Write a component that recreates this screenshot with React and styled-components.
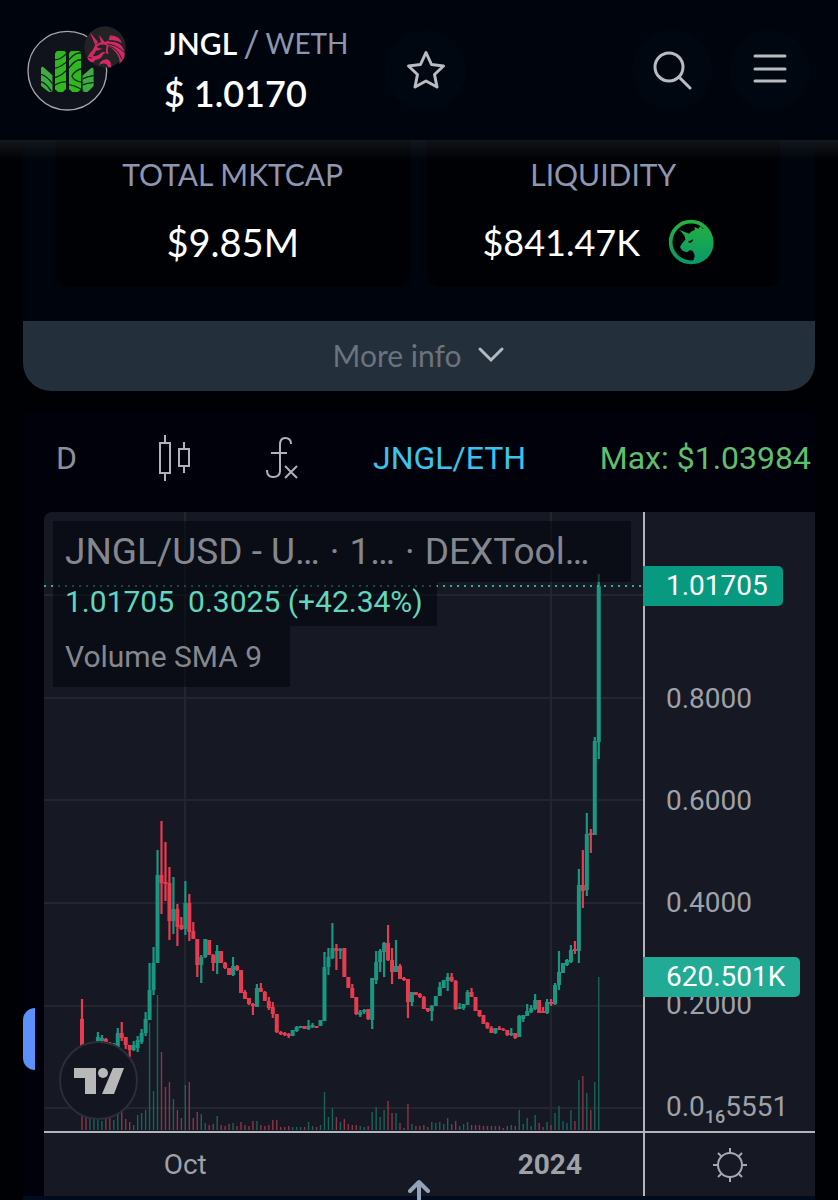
import React from "react";
import styled, { createGlobalStyle } from "styled-components";

const GlobalStyle = createGlobalStyle`
  * {
    box-sizing: border-box;
  }
  body {
    margin: 0;
    background: #000104;
    font-family: Lato, "Open Sans", sans-serif;
    color: #fff;
  }
  button {
    font: inherit;
    color: inherit;
    background: none;
    border: 0;
    padding: 0;
    cursor: pointer;
  }
  svg {
    display: block;
  }
`;

const Page = styled.div`
  position: relative;
  overflow: hidden;
`;

const Header = styled.header`
  display: flex;
  align-items: center;
  height: 140px;
  padding: 0 28px 0 20px;
  background: #00050d;
`;

const Token = styled.div`
  display: flex;
  align-items: center;
  gap: 34px;
  padding-bottom: 4px;
`;

const TokenTitle = styled.div`
  width: 182px;
`;

const Pair = styled.h1`
  display: flex;
  gap: 6px;
  margin: 0;
  font-size: 30px;
  line-height: 50px;
  font-weight: 600;
  white-space: nowrap;
`;

const Quote = styled.span`
  color: #8c96ae;
  font-size: 28px;
  font-weight: 400;
`;

const Slash = styled(Quote)`
  font-size: 36px;
`;

const Price = styled.p`
  margin: 0;
  font-size: 36px;
  line-height: 50px;
  font-weight: 600;
`;

const RoundButton = styled.button`
  display: flex;
  align-items: center;
  justify-content: center;
  width: 80px;
  height: 80px;
  border-radius: 50%;
  background: #000710;
  color: #b9bbc0;
  margin-left: ${props => props.$gap};
`;

const Content = styled.main`
  padding: 0 23px;
  background: linear-gradient(#14171c, #000104) top / 100% 20px no-repeat;
`;

const InfoCard = styled.section`
  border-radius: 0 0 28px 28px;
  overflow: hidden;
  background: linear-gradient(rgba(20, 23, 28, 0.9), #00050d 20px);
`;

const Stats = styled.div`
  display: grid;
  grid-template-columns: 1fr 1fr;
  gap: 17px;
  padding: 0 35px 34px 33px;
`;

const Stat = styled.div`
  height: 147px;
  padding-top: 9px;
  border-radius: 0 0 12px 12px;
  background: linear-gradient(#101318, #000105 20px);
  text-align: center;
`;

const StatName = styled.h2`
  margin: 0 0 20px;
  font-size: 30px;
  line-height: 50px;
  font-weight: 400;
  color: #8f97b0;
`;

const StatValue = styled.div`
  display: flex;
  align-items: center;
  justify-content: center;
  gap: 28px;
  padding-right: ${props => props.$end};
  font-size: ${props => props.$size};
  line-height: 46px;
`;

const MoreInfo = styled.button`
  display: flex;
  align-items: center;
  justify-content: center;
  gap: 16px;
  width: 100%;
  height: 70px;
  padding-bottom: 2px;
  background: #232f3a;
  color: #6b737e;
  font-size: 30px;
`;

const ChartPanel = styled.section`
  margin-top: 22px;
  background: #00010b;
  font-family: Roboto, sans-serif;
  border-bottom: 4px solid #020b1e;
`;

const Toolbar = styled.div`
  display: flex;
  align-items: center;
  justify-content: space-between;
  height: 99px;
  padding: 0 4px 10px 33px;
  font-size: 32px;
  color: #8d8f96;
  white-space: nowrap;
`;

const Interval = styled.button`
  width: 28px;
  text-align: left;
`;

const PairButton = styled.button`
  color: #3bc4ea;
`;

const MaxPrice = styled.span`
  color: #5fbf6d;
`;

const Chart = styled.div`
  display: grid;
  grid-template-columns: 1fr 172px;
  margin-left: 21px;
  border-radius: 8px 0 0 0;
  background: #161824;
  color: #9fa1a9;
  font-size: 28px;
`;

const Plot = styled.div`
  position: relative;
  border-bottom: 2px solid #b2b5be;
`;

const Legend = styled.div`
  position: absolute;
  top: 9px;
  left: 9px;
  right: 9px;
  display: flex;
  flex-direction: column;
  align-items: flex-start;
  color: #85878e;
`;

const LegendRow = styled.div`
  display: flex;
  align-items: center;
  gap: 10px;
  height: 61px;
  padding: 0 ${props => props.$end} 0 12px;
  background: rgba(4, 6, 14, 0.6);
  font-size: ${props => props.$size};
  white-space: nowrap;
`;

const LegendValues = styled(LegendRow)`
  gap: 14px;
  height: 44px;
  padding-bottom: 6px;
  color: #62d6bd;
`;

const Brand = styled.a`
  position: absolute;
  left: 15px;
  bottom: 11px;
  display: flex;
  align-items: center;
  justify-content: center;
  width: 79px;
  height: 79px;
  border: 2px solid #2b2d38;
  border-radius: 50%;
  background: #131520;
`;

const PriceAxis = styled.div`
  position: relative;
  border-left: 2px solid #b2b5be;
  border-bottom: 2px solid #b2b5be;
  padding-left: 21px;
`;

const Scale = styled.ul`
  display: flex;
  flex-direction: column;
  gap: 62px;
  margin: 0;
  padding: 167px 0 0;
  list-style: none;
  line-height: 40px;

  sub {
    font-size: 18px;
    line-height: 0;
    font-weight: 500;
  }
`;

const PriceTag = styled.div`
  position: absolute;
  left: -2px;
  top: ${props => props.$top};
  padding: 0 15px 0 23px;
  line-height: 40px;
  border-radius: 0 5px 5px 0;
  background: ${props => props.$color};
  color: #fff;
`;

const TimeAxis = styled.div`
  display: grid;
  grid-template-columns: 282fr 130fr 186fr;
  align-items: center;
  height: 63px;
  text-align: center;

  b {
    grid-column: 3;
  }
`;

const Corner = styled.div`
  display: flex;
  align-items: center;
  justify-content: center;
  border-left: 2px solid #b2b5be;
`;

const SideTab = styled.button`
  position: absolute;
  left: 23px;
  bottom: 130px;
  width: 12px;
  height: 62px;
  border-radius: 12px 0 0 12px;
  background: #5c90fa;
`;

const ScrollTop = styled.button`
  position: absolute;
  left: 50%;
  bottom: -8px;
  transform: translateX(-50%);
  color: #94a2ba;
`;

// up/down, high, body top, body bottom, low, volume
const candles = [
  ["d", 999, 1019, 1075, 1075, 17],
  ["d", 1070, 1072, 1078, 1080, 16],
  ["u", 1062, 1065, 1078, 1080, 15],
  ["u", 1050, 1052, 1065, 1068, 14],
  ["u", 1032, 1037, 1048, 1050, 13],
  ["u", 1035, 1038, 1041, 1042, 9],
  ["d", 1038, 1039, 1043, 1043, 13],
  ["d", 1042, 1043, 1047, 1048, 15],
  ["u", 1043, 1044, 1047, 1048, 10],
  ["u", 1028, 1033, 1047, 1048, 18],
  ["d", 1022, 1033, 1038, 1041, 19],
  ["d", 1037, 1037, 1045, 1049, 11],
  ["d", 1045, 1045, 1050, 1057, 8],
  ["u", 1041, 1045, 1050, 1051, 5],
  ["u", 1036, 1040, 1048, 1052, 15],
  ["u", 1029, 1033, 1042, 1044, 17],
  ["u", 1012, 1019, 1033, 1036, 20],
  ["u", 963, 990, 1020, 1020, 107],
  ["u", 947, 963, 990, 995, 39],
  ["u", 850, 875, 963, 963, 135],
  ["d", 821, 875, 883, 914, 78],
  ["d", 842, 882, 884, 901, 43],
  ["d", 867, 883, 921, 940, 48],
  ["u", 877, 909, 921, 934, 31],
  ["d", 904, 909, 927, 946, 20],
  ["d", 917, 925, 929, 930, 12],
  ["u", 881, 903, 929, 935, 45],
  ["d", 894, 903, 932, 941, 48],
  ["d", 922, 931, 939, 939, 12],
  ["d", 939, 939, 965, 977, 18],
  ["u", 955, 957, 965, 983, 16],
  ["u", 939, 939, 957, 958, 7],
  ["d", 940, 940, 955, 955, 5],
  ["d", 954, 955, 963, 971, 6],
  ["u", 945, 951, 963, 974, 14],
  ["d", 951, 951, 963, 963, 5],
  ["d", 962, 963, 968, 969, 4],
  ["d", 968, 968, 975, 975, 6],
  ["u", 957, 966, 975, 976, 7],
  ["d", 965, 966, 970, 971, 4],
  ["d", 970, 970, 993, 993, 8],
  ["d", 990, 992, 999, 999, 5],
  ["d", 998, 998, 1004, 1005, 4],
  ["d", 1003, 1004, 1006, 1015, 9],
  ["u", 984, 988, 1007, 1007, 9],
  ["d", 983, 988, 992, 992, 5],
  ["d", 991, 992, 1001, 1001, 4],
  ["d", 997, 1001, 1008, 1010, 5],
  ["d", 1002, 1007, 1014, 1018, 10],
  ["d", 1014, 1014, 1032, 1033, 10],
  ["d", 1031, 1032, 1034, 1035, 3],
  ["d", 1032, 1033, 1035, 1036, 3],
  ["d", 1033, 1034, 1036, 1038, 4],
  ["u", 1030, 1030, 1036, 1036, 3],
  ["u", 1026, 1027, 1031, 1032, 3],
  ["u", 1026, 1026, 1028, 1028, 3],
  ["d", 1026, 1026, 1029, 1029, 3],
  ["u", 1020, 1026, 1029, 1030, 8],
  ["u", 1023, 1025, 1027, 1028, 4],
  ["d", 1026, 1026, 1028, 1028, 3],
  ["u", 1020, 1020, 1026, 1026, 5],
  ["u", 952, 967, 1021, 1021, 38],
  ["u", 948, 957, 967, 975, 13],
  ["u", 923, 948, 958, 959, 22],
  ["d", 944, 948, 951, 970, 13],
  ["u", 948, 949, 951, 959, 8],
  ["d", 948, 948, 977, 977, 11],
  ["d", 977, 977, 988, 988, 6],
  ["d", 984, 988, 998, 998, 5],
  ["d", 997, 997, 1014, 1015, 5],
  ["u", 1010, 1012, 1015, 1017, 4],
  ["u", 1009, 1010, 1012, 1014, 3],
  ["d", 1009, 1009, 1019, 1020, 4],
  ["u", 978, 978, 1020, 1029, 18],
  ["u", 951, 962, 980, 984, 23],
  ["u", 949, 951, 962, 972, 13],
  ["u", 942, 943, 952, 977, 20],
  ["d", 925, 943, 960, 961, 29],
  ["d", 948, 960, 972, 984, 17],
  ["u", 940, 966, 972, 972, 17],
  ["d", 964, 966, 979, 979, 7],
  ["d", 977, 978, 980, 981, 2],
  ["d", 979, 979, 1002, 1018, 26],
  ["u", 992, 992, 1002, 1006, 6],
  ["d", 992, 992, 995, 995, 4],
  ["d", 993, 994, 997, 998, 4],
  ["d", 996, 997, 1009, 1009, 5],
  ["d", 1008, 1008, 1011, 1012, 3],
  ["u", 1005, 1006, 1011, 1021, 8],
  ["u", 996, 996, 1006, 1006, 7],
  ["u", 982, 987, 996, 996, 8],
  ["u", 980, 980, 988, 988, 6],
  ["u", 973, 977, 981, 991, 12],
  ["d", 973, 977, 981, 982, 6],
  ["d", 980, 981, 1009, 1010, 9],
  ["u", 1003, 1007, 1009, 1009, 4],
  ["u", 1004, 1004, 1008, 1010, 6],
  ["u", 990, 992, 1005, 1005, 8],
  ["d", 988, 992, 997, 997, 5],
  ["d", 997, 997, 1011, 1011, 5],
  ["d", 1010, 1010, 1016, 1017, 5],
  ["d", 1015, 1015, 1024, 1024, 4],
  ["d", 1022, 1023, 1028, 1029, 4],
  ["d", 1026, 1028, 1033, 1033, 4],
  ["u", 1028, 1028, 1033, 1034, 4],
  ["d", 1026, 1028, 1030, 1030, 4],
  ["d", 1028, 1029, 1030, 1031, 2],
  ["d", 1030, 1030, 1035, 1036, 4],
  ["u", 1028, 1033, 1035, 1036, 5],
  ["d", 1033, 1033, 1038, 1039, 4],
  ["u", 1015, 1016, 1037, 1037, 20],
  ["u", 1015, 1015, 1019, 1022, 6],
  ["u", 1004, 1011, 1016, 1016, 12],
  ["u", 1005, 1008, 1012, 1013, 4],
  ["u", 994, 1000, 1009, 1010, 15],
  ["d", 1000, 1000, 1013, 1013, 7],
  ["d", 1007, 1011, 1013, 1013, 3],
  ["u", 999, 1002, 1013, 1014, 8],
  ["d", 999, 1002, 1004, 1006, 5],
  ["u", 983, 985, 1004, 1005, 17],
  ["u", 951, 972, 985, 990, 24],
  ["u", 963, 963, 973, 973, 9],
  ["u", 959, 960, 965, 966, 7],
  ["u", 945, 950, 962, 963, 20],
  ["d", 941, 949, 951, 954, 9],
  ["u", 869, 885, 951, 963, 50],
  ["d", 850, 885, 891, 908, 54],
  ["u", 813, 834, 890, 896, 37],
  ["d", 829, 833, 835, 853, 20],
  ["u", 737, 741, 835, 835, 48],
  ["u", 574, 586, 742, 759, 153]
];

const colors = { u: "#1a9781", d: "#e83b50" };
const volumeColors = { u: "#1a6358", d: "#8c3547" };

const firstX = 82;
const step = 3.975;
const plotBottom = 1130;

const PriceChart = () => (
  <svg
    width="100%"
    height="619"
    viewBox="44 512 599 619"
    preserveAspectRatio="none"
    role="img"
    aria-label="JNGL/USD daily candles"
  >
    <g stroke="#24262f" strokeWidth="2">
      {[595, 698, 800, 903, 1006, 1108].map(y => (
        <path key={y} d={`M44 ${y}H643`} />
      ))}
      {[185, 551].map(x => (
        <path key={x} d={`M${x} 512V1131`} />
      ))}
    </g>
    {candles.map(([dir, , , , , volume], i) => (
      <rect
        key={i}
        x={firstX + i * step - 0.7}
        y={plotBottom - volume}
        width="1.4"
        height={volume}
        fill={volumeColors[dir]}
      />
    ))}
    {candles.map(([dir, high, top, bottom, low], i) => {
      const x = firstX + i * step;
      return (
        <g key={i} fill={colors[dir]}>
          <rect x={x - 1.1} y={high} width="2.2" height={low - high} />
          <rect x={x - 2} y={top} width="4" height={bottom - top} />
        </g>
      );
    })}
    <path d="M44 586H643" stroke="#2fae99" strokeWidth="2" strokeDasharray="2 5" />
  </svg>
);

const TokenLogo = () => (
  <svg width="110" height="100" viewBox="0 0 330 300" aria-hidden="true">
    <defs>
      <clipPath id="bars">
        <path d="M63 152Q65 143 72 149L97 172V220Q90 225 84 220L63 203ZM105 108Q107 98 117 98H128Q138 98 138 108V213L128 223H115L105 214ZM147 108Q149 98 159 98H172Q183 98 183 108V214L173 223H158L147 213ZM188 173L214 150Q221 148 221 156V204L203 221Q194 224 188 219Z" />
      </clipPath>
    </defs>
    <circle cx="142" cy="158" r="118" fill="#10131b" stroke="#a4a6aa" strokeWidth="4" />
    <g clipPath="url(#bars)">
      <path fill="#2fb81f" d="M55 90H230V230H55Z" />
      <path fill="#45a552" opacity=".7" d="M55 140H100V230H55ZM186 140H230V230H186Z" />
      <g fill="none" stroke="#0d2a14" strokeWidth="4">
        <path d="M58 168Q80 172 98 198M58 190Q78 194 94 220" />
        <path d="M100 126Q124 126 142 104M100 152Q126 148 150 122T190 110M100 180Q128 174 150 146T190 128M100 206Q116 190 142 192" />
        <path d="M190 150Q162 158 156 174Q158 188 190 194M142 200Q162 200 190 218" />
        <path d="M184 184Q204 174 226 172M184 202Q206 192 226 194" />
      </g>
    </g>
    <circle cx="255" cy="87" r="62" fill="#232225" />
    <g fill="#cf2a66">
      <path d="M209 42L234 72L226 82ZM237 50L254 72L246 84Z" />
      <path d="M226 80Q240 70 254 72Q276 62 300 78Q318 96 313 118Q306 132 298 138Q302 120 288 104Q276 88 264 86Q262 98 266 108Q256 104 250 108Q244 124 226 126L220 133Q210 134 203 124Q201 116 208 108Q220 96 226 80Z" />
      <path d="M270 52Q300 54 306 76Q290 66 266 66Z" />
      <path d="M236 142Q244 122 262 124Q276 130 273 148Q262 150 262 140Q250 132 236 142Z" />
    </g>
    <path
      fill="#232225"
      d="M230 86Q244 76 260 82Q256 96 258 104Q246 98 240 108Q232 116 218 114Q226 104 228 98Q244 96 246 90Q238 94 230 86Z"
    />
    <path
      fill="none"
      stroke="#232225"
      strokeWidth="3"
      d="M262 78Q290 80 314 104M266 84Q294 92 306 124M268 70Q296 68 312 88M206 118L216 120"
    />
  </svg>
);

const UnicornIcon = () => (
  <svg width="46" height="46" viewBox="31 36 138 138" aria-hidden="true">
    <defs>
      <linearGradient id="leaf" gradientUnits="userSpaceOnUse" x1="0" y1="38" x2="0" y2="172">
        <stop offset="0" stopColor="#28b23c" />
        <stop offset="1" stopColor="#06996b" />
      </linearGradient>
    </defs>
    <circle cx="100" cy="105" r="61" fill="none" stroke="url(#leaf)" strokeWidth="11" />
    <path
      fill="url(#leaf)"
      d="M64 68L94 80Q100 72 112 68L110 60L122 65L129 57L136 66L142 58A62 62 0 0 1 100 170Q118 152 106 133Q98 126 90 134Q76 138 67 120Q72 108 83 98Q84 84 64 68Z"
    />
    <path fill="#000105" d="M91 104L106 97Q106 107 96 108Z" />
  </svg>
);

const StarIcon = () => (
  <svg width="40" height="40" viewBox="0 0 40 40" aria-hidden="true">
    <path
      d="M20 2.500L25.500 14.500L37.500 16L28.500 24.500L31 37L20 31L9 37L11.500 24.500L2.500 16L14.500 14.500Z"
      fill="none"
      stroke="currentColor"
      strokeWidth="3"
      strokeLinejoin="round"
    />
  </svg>
);

const SearchIcon = () => (
  <svg width="40" height="40" viewBox="0 0 40 40" fill="none" stroke="currentColor" strokeWidth="3" strokeLinecap="round" aria-hidden="true">
    <circle cx="17" cy="17" r="14" />
    <path d="M27 27L38 38" />
  </svg>
);

const MenuIcon = () => (
  <svg width="36" height="32" viewBox="0 0 36 32" stroke="currentColor" strokeWidth="3" strokeLinecap="round" aria-hidden="true">
    <path d="M3 2H33M3 15H33M3 27H33" />
  </svg>
);

const CandlesIcon = () => (
  <svg width="34" height="48" viewBox="0 0 34 48" fill="none" stroke="#b0b2b8" strokeWidth="2" aria-hidden="true">
    <path d="M2 9H12V39H2ZM7 1V9M7 39V47M21 15H31V32H21ZM26 8V15M26 32V39" />
  </svg>
);

const FunctionIcon = () => (
  <svg width="34" height="44" viewBox="0 0 34 44" fill="none" stroke="#b0b2b8" strokeWidth="2" aria-hidden="true">
    <path d="M26 8Q26 2 20 2Q15 2 15 9V35Q15 41 8 41Q2 41 2 34M6 17H22M20 30L32 42M32 30L20 42" />
  </svg>
);

const SunIcon = () => (
  <svg width="36" height="36" viewBox="0 0 36 36" fill="none" stroke="#a6a8b0" strokeWidth="2" aria-hidden="true">
    <circle cx="18" cy="18" r="12" />
    <path d="M18 1V6M18 30V35M1 18H6M30 18H35M6 6L9.500 9.500M26.500 26.500L30 30M30 6L26.500 9.500M9.500 26.500L6 30" />
  </svg>
);

const App = () => (
  <Page>
    <GlobalStyle />
    <Header>
      <Token>
        <TokenLogo />
        <TokenTitle>
          <Pair>
            JNGL <Slash>/</Slash> <Quote>WETH</Quote>
          </Pair>
          <Price>$ 1.0170</Price>
        </TokenTitle>
      </Token>
      <RoundButton type="button" aria-label="Add to favorites" $gap="40px">
        <StarIcon />
      </RoundButton>
      <RoundButton type="button" aria-label="Search" $gap="auto">
        <SearchIcon />
      </RoundButton>
      <RoundButton type="button" aria-label="Menu" $gap="18px">
        <MenuIcon />
      </RoundButton>
    </Header>
    <Content>
      <InfoCard>
        <Stats>
          <Stat>
            <StatName>TOTAL MKTCAP</StatName>
            <StatValue $size="38px" $end="0">
              $9.85M
            </StatValue>
          </Stat>
          <Stat>
            <StatName>LIQUIDITY</StatName>
            <StatValue $size="36px" $end="10px">
              $841.47K
              <UnicornIcon />
            </StatValue>
          </Stat>
        </Stats>
        <MoreInfo type="button">
          More info
          <svg width="28" height="18" viewBox="0 0 28 18" aria-hidden="true">
            <path d="M3 3L14 14L25 3" fill="none" stroke="#b4bac1" strokeWidth="3" strokeLinecap="round" />
          </svg>
        </MoreInfo>
      </InfoCard>
      <ChartPanel>
        <Toolbar>
          <Interval type="button">D</Interval>
          <button type="button" aria-label="Chart style">
            <CandlesIcon />
          </button>
          <button type="button" aria-label="Indicators">
            <FunctionIcon />
          </button>
          <PairButton type="button">JNGL/ETH</PairButton>
          <MaxPrice>Max: $1.03984</MaxPrice>
        </Toolbar>
        <Chart>
          <Plot>
            <PriceChart />
            <Legend>
              <LegendRow $size="37px" $end="42px">
                <span>JNGL/USD - U…</span>
                <span>·</span>
                <span>1…</span>
                <span>·</span>
                <span>DEXTool…</span>
              </LegendRow>
              <LegendValues $size="30px" $end="14px">
                <span>1.01705</span>
                <span>0.3025 (+42.34%)</span>
              </LegendValues>
              <LegendRow $size="30px" $end="28px">
                Volume SMA 9
              </LegendRow>
            </Legend>
            <Brand href="#chart" aria-label="TradingView">
              <svg width="52" height="28" viewBox="0 0 52 28" fill="#b8b8b8" aria-hidden="true">
                <path d="M1 1H23V27H12V11H1Z" />
                <circle cx="30" cy="6" r="5" />
                <path d="M40 1H51L41 27H29Z" />
              </svg>
            </Brand>
          </Plot>
          <PriceAxis>
            <Scale>
              <li>0.8000</li>
              <li>0.6000</li>
              <li>0.4000</li>
              <li>0.2000</li>
              <li>
                0.0<sub>16</sub>5551
              </li>
            </Scale>
            <PriceTag $top="54px" $color="#089981">
              1.01705
            </PriceTag>
            <PriceTag $top="445px" $color="#22ab94">
              620.501K
            </PriceTag>
          </PriceAxis>
          <TimeAxis>
            <span>Oct</span>
            <b>2024</b>
          </TimeAxis>
          <Corner>
            <SunIcon />
          </Corner>
        </Chart>
      </ChartPanel>
    </Content>
    <SideTab type="button" aria-label="Open side panel" />
    <ScrollTop type="button" aria-label="Back to top">
      <svg width="26" height="30" viewBox="0 0 26 30" fill="none" stroke="currentColor" strokeWidth="4" strokeLinecap="round" strokeLinejoin="round" aria-hidden="true">
        <path d="M4 13L13 4L22 13M13 4V30" />
      </svg>
    </ScrollTop>
  </Page>
);

export default App;
